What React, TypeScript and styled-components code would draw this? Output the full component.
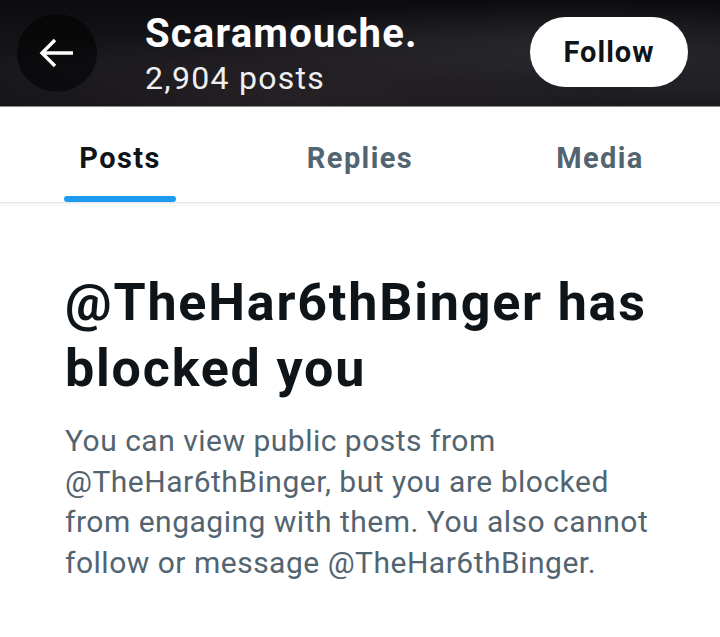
import * as React from "react";
import styled, { createGlobalStyle } from "styled-components";

const GlobalStyle = createGlobalStyle`
  html, body {
    margin: 0;
    padding: 0;
    background: #ffffff;
    font-family: Roboto, "Liberation Sans", Arial, sans-serif;
  }
`;

const SPage = styled.div`
  width: 720px;
  min-height: 637px;
  background: #ffffff;
`;

const SHeader = styled.div`
  height: 107px;
  display: flex;
  align-items: center;
  padding: 0 32px 0 17px;
  box-sizing: border-box;
  border-bottom: 1px solid #8a8a8e;
  background:
    radial-gradient(ellipse at 40% 90%, rgba(70, 55, 60, 0.35), transparent 55%),
    radial-gradient(ellipse at 78% 40%, rgba(80, 80, 90, 0.3), transparent 45%),
    radial-gradient(ellipse at 95% 80%, rgba(60, 60, 70, 0.3), transparent 40%),
    linear-gradient(180deg, #0c0c0f 0%, #18181c 60%, #131317 100%);
`;

const SBackButton = styled.div`
  width: 80px;
  height: 78px;
  border-radius: 50%;
  background: rgba(0, 0, 0, 0.55);
  display: flex;
  align-items: center;
  justify-content: center;
  flex-shrink: 0;
`;

const STitleBlock = styled.div`
  display: flex;
  flex-direction: column;
  margin-left: 48px;
  flex: 1;
  color: #ffffff;
`;

const SName = styled.div`
  font-size: 40px;
  font-weight: 700;
  letter-spacing: 1.2px;
  line-height: 44px;
  margin-top: 4px;
`;

const SPostCount = styled.div`
  font-size: 32px;
  font-weight: 400;
  letter-spacing: 1.3px;
  line-height: 40px;
  margin-top: 2px;
  color: #eef0f2;
`;

const SFollowButton = styled.button`
  width: 158px;
  height: 70px;
  border-radius: 35px;
  border: none;
  background: #ffffff;
  color: #0f1419;
  font-family: inherit;
  font-size: 29px;
  font-weight: 700;
  letter-spacing: 1px;
  cursor: pointer;
  margin-top: -2px;
`;

const STabs = styled.div`
  display: grid;
  grid-template-columns: repeat(3, 1fr);
  height: 95px;
  border-bottom: 1px solid #e6e8ea;
  box-shadow: 0 2px 4px rgba(0, 0, 0, 0.06);
`;

interface ITabStyle {
  active: boolean;
}

const STab = styled.div<ITabStyle>`
  position: relative;
  display: flex;
  align-items: center;
  justify-content: center;
  font-size: 29px;
  font-weight: 700;
  letter-spacing: 1.4px;
  color: ${({ active }) => (active ? "#0f1419" : "#536471")};
  padding-top: 6px;
`;

const SIndicator = styled.div`
  position: absolute;
  bottom: 0;
  left: 50%;
  transform: translateX(-50%);
  width: 112px;
  height: 6px;
  border-radius: 3px;
  background: #1d9bf0;
`;

const SContent = styled.div`
  padding: 67px 55px 0 65px;
`;

const SHeading = styled.h1`
  margin: 0;
  font-size: 52px;
  font-weight: 700;
  letter-spacing: 1.8px;
  line-height: 66px;
  color: #0f1419;
`;

const SBody = styled.p`
  margin: 19px 0 0;
  font-size: 30px;
  letter-spacing: 0.5px;
  line-height: 40.5px;
  color: #536471;
`;

const BackArrow = () => (
  <svg width="36" height="32" viewBox="0 0 36 32" fill="none">
    <path
      d="M34 16H3M16 3L3 16l13 13"
      stroke="#ffffff"
      strokeWidth="3.4"
      strokeLinecap="butt"
      strokeLinejoin="miter"
    />
  </svg>
);

const tabs = ["Posts", "Replies", "Media"];

const App = () => {
  const [active, setActive] = React.useState(0);
  return (
    <SPage>
      <GlobalStyle />
      <SHeader>
        <SBackButton>
          <BackArrow />
        </SBackButton>
        <STitleBlock>
          <SName>Scaramouche.</SName>
          <SPostCount>2,904 posts</SPostCount>
        </STitleBlock>
        <SFollowButton>Follow</SFollowButton>
      </SHeader>
      <STabs>
        {tabs.map((t, i) => (
          <STab key={t} active={i === active} onClick={() => setActive(i)}>
            {t}
            {i === active && <SIndicator />}
          </STab>
        ))}
      </STabs>
      <SContent>
        <SHeading>@TheHar6thBinger has blocked you</SHeading>
        <SBody>
          You can view public posts from @TheHar6thBinger, but you are blocked
          from engaging with them. You also cannot follow or message
          @TheHar6thBinger.
        </SBody>
      </SContent>
    </SPage>
  );
};

export default App;
